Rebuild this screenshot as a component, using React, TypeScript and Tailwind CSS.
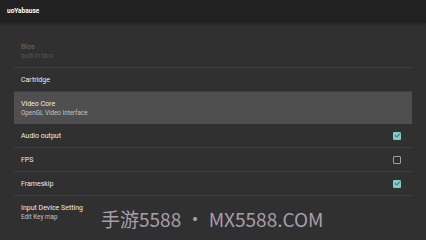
import { Check } from "lucide-react";

type Row = {
  title: string;
  summary?: string;
  checked?: boolean;
  disabled?: boolean;
  selected?: boolean;
};

const rows: Row[] = [
  { title: "Bios", summary: "built in bios", disabled: true },
  { title: "Cartridge" },
  { title: "Video Core", summary: "OpenGL Video Interface", selected: true },
  { title: "Audio output", checked: true },
  { title: "FPS", checked: false },
  { title: "Frameskip", checked: true },
  { title: "Input Device Setting", summary: "Edit Key map" },
];

function Box({ checked }: { checked: boolean }) {
  if (checked) {
    return (
      <div className="flex h-[8px] w-[8px] items-center justify-center rounded-[1px] bg-[#80cbc4]">
        <Check className="h-[7px] w-[7px] text-[#263238]" strokeWidth={3} />
      </div>
    );
  }
  return <div className="h-[8px] w-[8px] rounded-[1px] border border-[#a0a0a0]" />;
}

function PrefRow({ row, last }: { row: Row; last: boolean }) {
  const tall = !!row.summary;
  return (
    <div
      className={`flex items-center justify-between pl-[7px] pr-[11px] ${
        tall ? "h-[32px]" : "h-[24px]"
      } ${row.selected ? "bg-[#4f4f4f]" : ""} ${
        !last && !row.selected ? "border-b border-[#3e3e3e]" : ""
      }`}
    >
      <div className="flex flex-col">
        <span
          className={`text-[7px] leading-[10px] ${
            row.disabled ? "text-[#6b6b6b]" : "text-[#ececec]"
          }`}
        >
          {row.title}
        </span>
        {row.summary && (
          <span
            className={`text-[6.3px] leading-[9px] ${
              row.disabled ? "text-[#575757]" : "text-[#c4c4c4]"
            }`}
          >
            {row.summary}
          </span>
        )}
      </div>
      {row.checked !== undefined && <Box checked={row.checked} />}
    </div>
  );
}

export default function App() {
  return (
    <div
      className="relative h-[240px] w-[426px] overflow-hidden bg-[#303030]"
      style={{ fontFamily: "Roboto, 'Noto Sans', sans-serif" }}
    >
      <div className="flex h-[23px] items-center bg-[#212121] px-[7px] shadow-[0_1px_2px_rgba(0,0,0,0.3)]">
        <span className="text-[6.5px] font-bold text-white">uoYabause</span>
      </div>
      <div className="mx-[14px] pt-[13px]">
        {rows.map((r, i) => (
          <PrefRow key={r.title} row={r} last={i === rows.length - 1} />
        ))}
      </div>
      <div
        className="absolute left-[101px] top-[205px] whitespace-nowrap text-[19px] leading-[28px] text-[#a89dab]"
        style={{ fontFamily: "'Noto Sans CJK SC', 'Open Sans', sans-serif" }}
      >
        手游5588 • MX5588.COM
      </div>
    </div>
  );
}
